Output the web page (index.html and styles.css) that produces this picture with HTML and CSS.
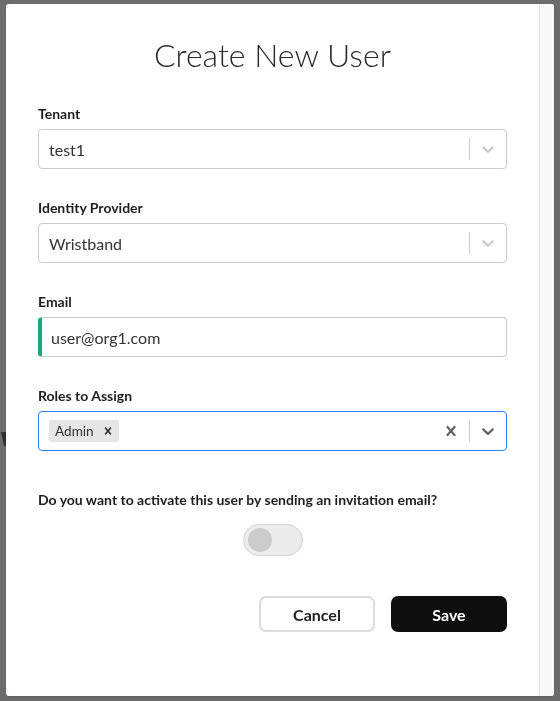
FILE: index.html
```html
<!DOCTYPE html>
<html lang="en">
<head>
<meta charset="utf-8">
<title>Create New User</title>
<link rel="stylesheet" href="styles.css">
</head>
<body>
<div class="backdrop">
  <span class="bg-mark"></span>
</div>
<div class="modal">
  <div class="modal-body">
    <h1 class="title">Create New User</h1>

    <div class="group">
      <label class="label">Tenant</label>
      <div class="select">
        <div class="select-value">test1</div>
        <span class="sep"></span>
        <span class="indicator">
          <svg viewBox="0 0 20 20" width="20" height="20"><path class="chev-light" d="M4.516 7.548c0.436-0.446 1.043-0.481 1.576 0l3.908 3.747 3.908-3.747c0.533-0.481 1.141-0.446 1.574 0 0.436 0.445 0.408 1.197 0 1.615-0.406 0.418-4.695 4.502-4.695 4.502-0.217 0.223-0.502 0.335-0.787 0.335s-0.57-0.112-0.789-0.335c0 0-4.287-4.084-4.695-4.502s-0.436-1.170 0-1.615z"/></svg>
        </span>
      </div>
    </div>

    <div class="group">
      <label class="label">Identity Provider</label>
      <div class="select">
        <div class="select-value">Wristband</div>
        <span class="sep"></span>
        <span class="indicator">
          <svg viewBox="0 0 20 20" width="20" height="20"><path class="chev-light" d="M4.516 7.548c0.436-0.446 1.043-0.481 1.576 0l3.908 3.747 3.908-3.747c0.533-0.481 1.141-0.446 1.574 0 0.436 0.445 0.408 1.197 0 1.615-0.406 0.418-4.695 4.502-4.695 4.502-0.217 0.223-0.502 0.335-0.787 0.335s-0.57-0.112-0.789-0.335c0 0-4.287-4.084-4.695-4.502s-0.436-1.170 0-1.615z"/></svg>
        </span>
      </div>
    </div>

    <div class="group">
      <label class="label">Email</label>
      <div class="input">user@org1.com</div>
    </div>

    <div class="group">
      <label class="label">Roles to Assign</label>
      <div class="select focused">
        <div class="multi">
          <span class="chip"><span class="chip-label">Admin</span><span class="chip-remove"><svg viewBox="0 0 20 20" width="14" height="14"><path d="M14.348 14.849c-0.469 0.469-1.229 0.469-1.697 0l-2.651-3.030-2.651 3.029c-0.469 0.469-1.229 0.469-1.697 0-0.469-0.469-0.469-1.229 0-1.697l2.758-3.150-2.759-3.152c-0.469-0.469-0.469-1.228 0-1.697s1.228-0.469 1.697 0l2.652 3.031 2.651-3.031c0.469-0.469 1.228-0.469 1.697 0s0.469 1.229 0 1.697l-2.758 3.152 2.758 3.150c0.469 0.469 0.469 1.229 0 1.698z"/></svg></span></span>
        </div>
        <span class="indicator">
          <svg viewBox="0 0 20 20" width="20" height="20"><path class="chev-dark" d="M14.348 14.849c-0.469 0.469-1.229 0.469-1.697 0l-2.651-3.030-2.651 3.029c-0.469 0.469-1.229 0.469-1.697 0-0.469-0.469-0.469-1.229 0-1.697l2.758-3.150-2.759-3.152c-0.469-0.469-0.469-1.228 0-1.697s1.228-0.469 1.697 0l2.652 3.031 2.651-3.031c0.469-0.469 1.228-0.469 1.697 0s0.469 1.229 0 1.697l-2.758 3.152 2.758 3.150c0.469 0.469 0.469 1.229 0 1.698z"/></svg>
        </span>
        <span class="sep"></span>
        <span class="indicator">
          <svg viewBox="0 0 20 20" width="20" height="20"><path class="chev-dark" d="M4.516 7.548c0.436-0.446 1.043-0.481 1.576 0l3.908 3.747 3.908-3.747c0.533-0.481 1.141-0.446 1.574 0 0.436 0.445 0.408 1.197 0 1.615-0.406 0.418-4.695 4.502-4.695 4.502-0.217 0.223-0.502 0.335-0.787 0.335s-0.57-0.112-0.789-0.335c0 0-4.287-4.084-4.695-4.502s-0.436-1.170 0-1.615z"/></svg>
        </span>
      </div>
    </div>

    <p class="question">Do you want to activate this user by sending an invitation email?</p>

    <div class="toggle-row">
      <div class="toggle"><span class="knob"></span></div>
    </div>

    <div class="actions">
      <button class="btn btn-cancel">Cancel</button>
      <button class="btn btn-save">Save</button>
    </div>
  </div>
  <div class="scrolltrack"></div>
</div>
</body>
</html>
```

FILE: styles.css
```css
html, body {
  margin: 0;
  padding: 0;
}

body {
  width: 560px;
  height: 701px;
  overflow: hidden;
  background: #6c6c6c;
  font-family: "Lato", "Liberation Sans", sans-serif;
}

.backdrop {
  height: 701px;
  background: #6c6c6c;
}

.bg-mark {
  position: absolute;
  left: 1px;
  top: 432px;
  width: 5px;
  height: 14px;
  background: #303030;
  clip-path: polygon(0 0, 100% 0, 100% 100%, 60% 100%);
}

.modal {
  position: fixed;
  left: 6px;
  top: 4px;
  width: 548px;
  height: 692px;
  background: #ffffff;
  border-radius: 3px;
  display: flex;
  overflow: hidden;
  box-shadow: 0 1px 2px rgba(0, 0, 0, 0.15);
}

.modal-body {
  flex: 1;
  padding: 33px 32px 0;
}

.scrolltrack {
  width: 14px;
  background: #f8f8f8;
  border-left: 1px solid #e6e6e6;
}

.title {
  margin: 0 0 31px;
  font-size: 32px;
  line-height: 36px;
  font-weight: 300;
  color: #2a2a2a;
  text-align: center;
}

.group {
  margin-bottom: 29px;
}

.label {
  display: block;
  font-size: 14px;
  line-height: 20px;
  font-weight: 700;
  color: #1e1e1e;
  margin-bottom: 5px;
}

.select {
  box-sizing: border-box;
  height: 40px;
  border: 1px solid #cccccc;
  border-radius: 4px;
  display: flex;
  align-items: center;
  background: #ffffff;
}

.select.focused {
  border-color: #2684ff;
}

.select-value {
  flex: 1;
  padding-left: 10px;
  font-size: 16px;
  color: #333333;
}

.sep {
  align-self: stretch;
  width: 1px;
  margin: 8px 0;
  background: #cccccc;
}

.indicator {
  display: flex;
  padding: 8px;
}

.indicator svg {
  display: block;
}

.chev-light {
  fill: #cccccc;
}

.chev-dark {
  fill: #666666;
}

.input {
  box-sizing: border-box;
  height: 40px;
  border: 1px solid #cccccc;
  border-left: 4px solid #1ca67c;
  border-radius: 4px;
  padding-left: 9px;
  display: flex;
  align-items: center;
  font-size: 16px;
  color: #333333;
}

.multi {
  flex: 1;
  padding-left: 10px;
  display: flex;
  align-items: center;
}

.chip {
  display: inline-flex;
  align-items: center;
  background: #e6e6e6;
  border-radius: 2px;
  height: 22px;
}

.chip-label {
  padding: 0 3px 0 6px;
  font-size: 13.6px;
  color: #333333;
}

.chip-remove {
  display: flex;
  align-items: center;
  padding: 0 4px;
  height: 22px;
}

.chip-remove svg {
  display: block;
  fill: #333333;
}

.question {
  margin: 39px 0 0;
  font-size: 14px;
  line-height: 20px;
  font-weight: 700;
  color: #1e1e1e;
}

.toggle-row {
  display: flex;
  justify-content: center;
  margin-top: 14px;
}

.toggle {
  box-sizing: border-box;
  width: 60px;
  height: 32px;
  border: 1px solid #d2d2d2;
  border-radius: 16px;
  background: #ececec;
  display: flex;
  align-items: center;
  padding-left: 4px;
}

.knob {
  width: 24px;
  height: 24px;
  border-radius: 50%;
  background: #cccccc;
}

.actions {
  display: flex;
  justify-content: flex-end;
  gap: 16px;
  margin-top: 40px;
}

.btn {
  box-sizing: border-box;
  width: 116px;
  height: 36px;
  border-radius: 7px;
  font-family: "Lato", "Liberation Sans", sans-serif;
  font-size: 16px;
  font-weight: 700;
  cursor: pointer;
}

.btn-cancel {
  background: #ffffff;
  border: 2px solid #dcdcdc;
  color: #222222;
}

.btn-save {
  background: #0e0e0e;
  border: none;
  color: #ffffff;
}
```
